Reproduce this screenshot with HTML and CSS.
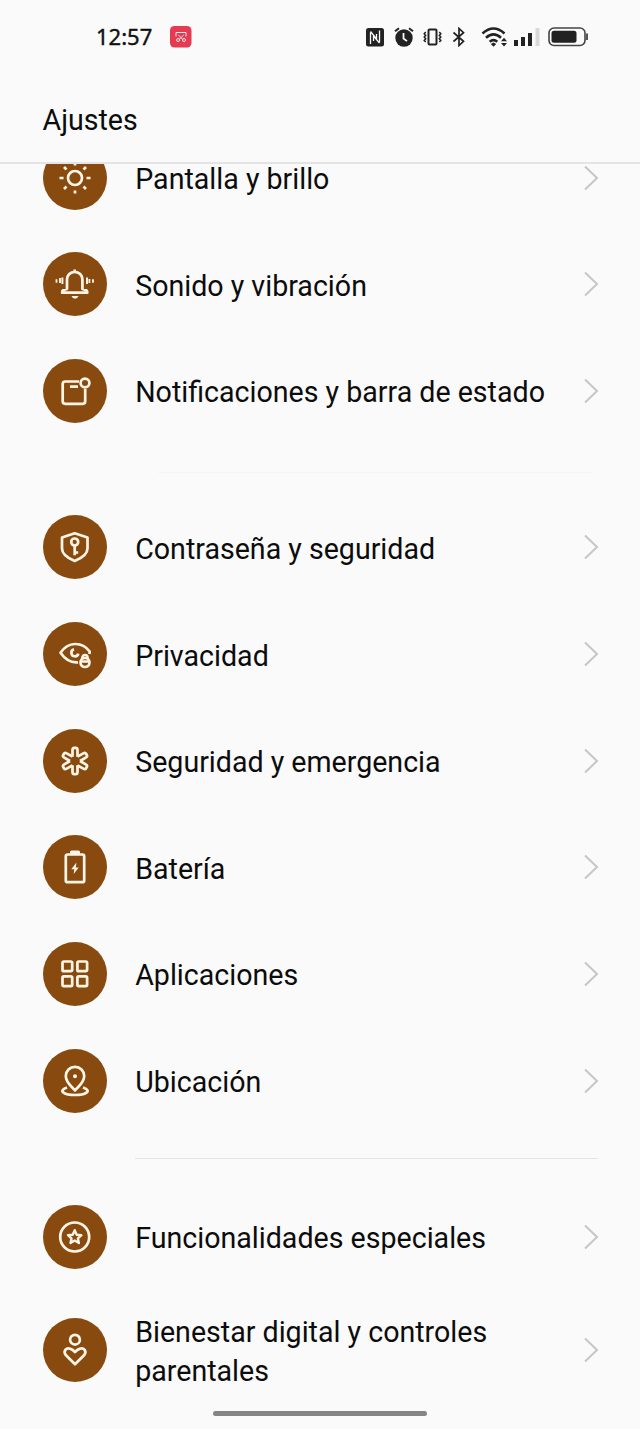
FILE: index.html
```html
<!DOCTYPE html>
<html lang="es">
<head>
<meta charset="utf-8">
<title>Ajustes</title>
<link rel="stylesheet" href="styles.css">
</head>
<body>
<div class="screen">
  <div class="status">
    <span class="time">12:57</span>
    <svg class="badge" width="22" height="22" viewBox="0 0 22 22"><rect width="21.5" height="21.5" rx="4.5" fill="#e43a52"/><g fill="none" stroke="#fbe3e6" stroke-width="1"><path d="M6 10.5V6.5h10v4"/><path d="M8.300 9l4.600 4.500M13.700 9l-4.600 4.500"/><circle cx="8" cy="14" r="1.500"/><circle cx="14" cy="14" r="1.500"/></g></svg>
    <div class="indicators">
      <svg class="nfc" width="18" height="19" viewBox="0 0 18 19"><rect width="18" height="18.500" rx="2.500" fill="#222"/><path d="M4.500 16V4.500M4.500 3.500L10.500 11V6M13.500 2.500v12M13.500 15L7.500 8v5" fill="none" stroke="#fafafa" stroke-width="1.300"/></svg>
      <svg class="alarm" width="20" height="20" viewBox="0 0 20 20"><circle cx="10" cy="11" r="8.700" fill="#222"/><path d="M1 4.300L5 1.200M19 4.300L15 1.200" stroke="#222" stroke-width="2"/><path d="M9.500 6v5.500l3.500 2.600" fill="none" stroke="#fafafa" stroke-width="1.800"/></svg>
      <svg class="vibrate" width="19" height="20" viewBox="0 0 19 20"><g fill="none" stroke="#222"><rect x="5.500" y="2.500" width="8" height="15" rx="1" stroke-width="2"/><path stroke-width="1.500" d="M2.700 5L1.200 6.700l1.500 1.700-1.500 1.700 1.500 1.700-1.500 1.700 1.500 1.500M16.300 5l1.500 1.700-1.500 1.700 1.500 1.700-1.500 1.700 1.500 1.700-1.500 1.500"/></g></svg>
      <svg class="bluetooth" width="14" height="20" viewBox="0 0 14 20"><path d="M1.500 5.500l10 8.800L7 18.500V1.500l4.500 4.200-10 8.800" fill="none" stroke="#222" stroke-width="1.700"/></svg>
      <svg class="wifi" width="27" height="22" viewBox="0 0 27 22"><g fill="none" stroke="#222" stroke-width="2.600"><path d="M1.500 7.500Q12.500-2.500 23.500 7.500"/><path d="M5 11.700Q12.500 5 20 11.700"/><path d="M8.700 15.700Q12.500 12.500 16.300 15.700"/></g><path d="M9.800 18l2.700-1.600 2.700 1.600-2.700 2.700zM20 15.300l3-3.600 3 3.600zM20 17l3 3.600 3-3.600z" fill="#222"/></svg>
      <svg class="signal" width="26" height="20" viewBox="0 0 26 20"><path d="M0 13h4v6H0zM7 10h4v9H7zM14 6h4v13h-4z" fill="#222"/><path d="M21.500 1h4v18h-4z" fill="#d9d9d9"/></svg>
      <svg class="battery" width="41" height="20" viewBox="0 0 41 20"><rect x="1" y="1" width="36" height="17.500" rx="5" fill="none" stroke="#444" stroke-width="1.600"/><rect x="3.500" y="3.700" width="25" height="12" rx="2.500" fill="#222"/><path d="M39 6.500v6.500" stroke="#555" stroke-width="2"/></svg>
    </div>
  </div>
  <header class="header"><h1 class="title">Ajustes</h1></header>
  <main class="list">
    <section class="group">
      <div class="row"><svg class="icon" viewBox="-32 -32 64 64"><circle class="disc" r="32"/><circle r="7"/><path d="M0-15.500v3M0 12.500v3M-15.500 0h4M11.500 0h4M-11-11l2.500 2.500M8.500 8.500L11 11M-11 11l2.500-2.500M8.500-8.500L11-11"/></svg><span class="label compact">Pantalla y brillo</span><svg class="chevron" viewBox="0 0 16 26"><path d="M2 1.500L14 13 2 24.500"/></svg></div>
      <div class="row"><svg class="icon" viewBox="-32 -32 64 64"><circle class="disc" r="32"/><path d="M-.3-14.500v2M-8 5V-4.500a7.700 7.700 0 0 1 15.400 0V5l4.100 1.300q.8.500.8 2.400h-25.200q0-1.900.8-2.400z"/><path stroke-width="2" d="M-12.600-6.500V0M12-6.500V0"/><path stroke-width="1.800" d="M-15-6v5M14.400-5v4M-18.500-4.700v3.400M18-4.700v3.400"/><path class="solid" d="M-3.500 12h7q-1 2.700-3.500 2.700T-3.500 12z"/></svg><span class="label">Sonido y vibración</span><svg class="chevron" viewBox="0 0 16 26"><path d="M2 1.500L14 13 2 24.500"/></svg></div>
      <div class="row"><svg class="icon" viewBox="-32 -32 64 64"><circle class="disc" r="32"/><path d="M4-9.500h-13.800q-2.500 0-2.500 2.500V10.300q0 2.500 2.500 2.500H7.700q2.500 0 2.500-2.500V-2M-5-4.300h8"/><circle cx="10" cy="-8" r="4.400"/></svg><span class="label">Notificaciones y barra de estado</span><svg class="chevron" viewBox="0 0 16 26"><path d="M2 1.500L14 13 2 24.500"/></svg></div>
    </section>
    <div class="divider faint"></div>
    <section class="group">
      <div class="row"><svg class="icon" viewBox="-32 -32 64 64"><circle class="disc" r="32"/><path d="M-.3-13.700L12.500-9.500V1.500C12.500 7.500 7 11-.3 14-7.500 11-13 7.500-13 1.500V-9.500z"/><circle cx="-.3" cy="-5" r="3.500"/><path d="M-.3-1.500V8.300M-.3 5.500h3.500"/></svg><span class="label">Contraseña y seguridad</span><svg class="chevron" viewBox="0 0 16 26"><path d="M2 1.500L14 13 2 24.500"/></svg></div>
      <div class="row"><svg class="icon" viewBox="-32 -32 64 64"><circle class="disc" r="32"/><path d="M3 8.300Q-7 9.500-14.500-1.200C-7-12.700 7-12.700 14.700-2.500L14.500 0M-1-4.600a3.500 3.500 0 1 0 4.300 4.200"/><circle cx="10" cy="8.500" r="4.500"/><path d="M7.500 5V3.500a2.500 2.500 0 0 1 5 0V5M5.700 7.500h8.600"/></svg><span class="label">Privacidad</span><svg class="chevron" viewBox="0 0 16 26"><path d="M2 1.500L14 13 2 24.500"/></svg></div>
      <div class="row"><svg class="icon" viewBox="-32 -32 64 64"><circle class="disc" r="32"/><path id="arm" d="M-2.500-4.330V-11q0-2.200 1.800-2.200h1.400q1.800 0 1.800 2.200v6.670"/><use href="#arm" transform="rotate(60)"/><use href="#arm" transform="rotate(120)"/><use href="#arm" transform="rotate(180)"/><use href="#arm" transform="rotate(240)"/><use href="#arm" transform="rotate(300)"/></svg><span class="label">Seguridad y emergencia</span><svg class="chevron" viewBox="0 0 16 26"><path d="M2 1.500L14 13 2 24.500"/></svg></div>
      <div class="row"><svg class="icon" viewBox="-32 -32 64 64"><circle class="disc" r="32"/><rect x="-9.200" y="-12.500" width="18.400" height="27.700" rx="1.800"/><path class="solid" d="M-5-13v-2q0-1.500 1.500-1.500h7q1.500 0 1.500 1.500v2zM1.500-4.500l-5.200 6.800h3L-1.300 7l5-6.500H.8z"/></svg><span class="label">Batería</span><svg class="chevron" viewBox="0 0 16 26"><path d="M2 1.500L14 13 2 24.500"/></svg></div>
      <div class="row"><svg class="icon" viewBox="-32 -32 64 64"><circle class="disc" r="32"/><rect x="-12.500" y="-12.500" width="9.700" height="9.700" rx="1.300"/><rect x="2.400" y="-12.500" width="9.700" height="9.700" rx="1.300"/><rect x="-12.500" y="2.400" width="9.700" height="9.700" rx="1.300"/><rect x="2.400" y="2.400" width="9.700" height="9.700" rx="1.300"/></svg><span class="label">Aplicaciones</span><svg class="chevron" viewBox="0 0 16 26"><path d="M2 1.500L14 13 2 24.500"/></svg></div>
      <div class="row"><svg class="icon" viewBox="-32 -32 64 64"><circle class="disc" r="32"/><path d="M0 9.500C-3 5.500-9.200 2-9.200-5a9.200 9.200 0 0 1 18.400 0C9.200 2 3 5.500 0 9.500zM-8 6.500C-18 10-10 14 0 14S18 10 8 6.500"/><circle class="solid" cy="-4.700" r="2"/></svg><span class="label">Ubicación</span><svg class="chevron" viewBox="0 0 16 26"><path d="M2 1.500L14 13 2 24.500"/></svg></div>
    </section>
    <div class="divider"></div>
    <section class="group">
      <div class="row"><svg class="icon" viewBox="-32 -32 64 64"><circle class="disc" r="32"/><circle cx="-.3" r="14.500"/><path stroke-width="2.400" d="M-.3-6.800L1.700-2.300 6.400-1.900 2.900 1.400 3.900 6-.3 3.500-4.500 6-3.500 1.400-7-1.900-2.300-2.300z"/></svg><span class="label">Funcionalidades especiales</span><svg class="chevron" viewBox="0 0 16 26"><path d="M2 1.500L14 13 2 24.500"/></svg></div>
      <div class="row tall"><svg class="icon" viewBox="-32 -32 64 64"><circle class="disc" r="32"/><circle cy="-10.300" r="4.900"/><path d="M0 14.300L-9 5.300C-12.500 1-8.500-2.500-5.200-1.300Q-2.500-.8 0 2 2.500-.8 5.200-1.300C8.500-2.500 12.500 1 9 5.300z"/></svg><span class="label">Bienestar digital y controles parentales</span><svg class="chevron" viewBox="0 0 16 26"><path d="M2 1.500L14 13 2 24.500"/></svg></div>
    </section>
  </main>
  <div class="homebar"></div>
</div>
</body>
</html>
```
FILE: styles.css
```css
* { box-sizing: border-box; }
body { margin: 0; background: #fafafa; color: #0c0c0c; font-family: Roboto, "Liberation Sans", sans-serif; }
.screen { width: 640px; height: 1429px; overflow: hidden; display: flex; flex-direction: column; }
.status { height: 74px; flex: none; display: flex; align-items: center; padding: 0 51px 0 96px; }
.time { width: 74px; padding-bottom: 2px; font: 400 22px/30px "Noto Sans", sans-serif; color: #111; -webkit-text-stroke: 0.400px #111; }
.indicators { margin-left: auto; display: flex; align-items: center; }
.alarm { margin-left: 10px; }
.vibrate { margin-left: 9px; }
.bluetooth { margin-left: 10px; }
.wifi { margin-left: 15px; }
.signal { margin-left: 6px; }
.battery { margin-left: 8px; }
.header { height: 90px; flex: none; padding: 26px 42.500px 0; border-bottom: 2px solid #e4e4e4; }
.title { margin: 0; font-size: 28.600px; line-height: 40px; font-weight: 400; }
.list { height: 1246px; flex: none; overflow: hidden; }
.group:first-child { margin-top: -39.600px; }
.row { height: 106.640px; display: flex; align-items: center; padding: 0 41.500px 0 42.500px; }
.tall { height: 119.200px; }
.icon { width: 64px; height: 64px; flex: none; fill: none; stroke: #fff5e6; stroke-width: 2.700px; stroke-linejoin: round; }
.disc { fill: #884a0e; stroke: none; }
.solid { fill: #fff5e6; stroke: none; }
.label { flex: 1; margin: 4px 20px 0 28.700px; font-size: 28.600px; line-height: 39px; }
.compact { margin-top: 3px; line-height: 27px; }
.chevron { width: 16px; height: 26px; flex: none; fill: none; stroke: #c6c6c6; stroke-width: 2px; }
.divider { height: 1px; margin: 24px 42px 24.800px 135px; background: #e4e4e4; }
.faint { margin: 28px 48px 20.800px 158px; background: #f5f5f5; }
.homebar { width: 214px; height: 5px; flex: none; margin: 1px auto 0; border-radius: 3px; background: #858585; }
```
